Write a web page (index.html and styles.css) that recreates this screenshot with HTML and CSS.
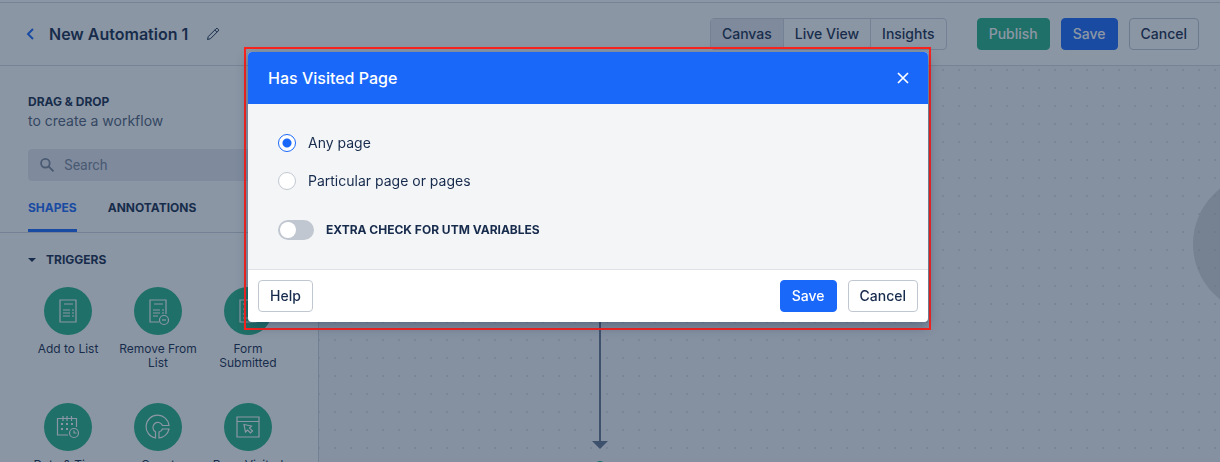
FILE: index.html
```
<!DOCTYPE html>
<html lang="en">
<head>
  <meta charset="utf-8">
  <meta name="viewport" content="width=device-width, initial-scale=1">
  <title>New Automation 1</title>
  <link rel="stylesheet" href="styles.css">
</head>
<body>
  <header class="topbar">
    <a class="back" href="#" aria-label="Back">
      <svg width="8" height="12" viewBox="0 0 8 12"><path d="M7 1L2 6l5 5" fill="none" stroke="currentColor" stroke-width="2"/></svg>
    </a>
    <h1>New Automation 1</h1>
    <button class="edit" aria-label="Rename">
      <svg width="14" height="14" viewBox="0 0 14 14" fill="none" stroke="currentColor" stroke-width="1" stroke-linejoin="round"><path d="M1.500 12.500l.8-3L10 1.800q.9-.9 1.800 0l.4.4q.9.900 0 1.800L4.500 11.700zM8.800 3l2.200 2.200"/></svg>
    </button>
    <div class="views">
      <button class="active">Canvas</button>
      <button>Live View</button>
      <button>Insights</button>
    </div>
    <div class="actions">
      <button class="btn green">Publish</button>
      <button class="btn blue">Save</button>
      <button class="btn">Cancel</button>
    </div>
  </header>

  <div class="main">
    <aside class="sidebar">
      <div class="intro">
        <h2>DRAG &amp; DROP</h2>
        <p>to create a workflow</p>
        <label class="search">
          <svg width="16" height="16" viewBox="0 0 16 16" fill="none" stroke="currentColor" stroke-width="2"><circle cx="6" cy="6" r="4.800"/><path d="M9.500 9.500L15 15"/></svg>
          <input type="text" placeholder="Search" aria-label="Search">
        </label>
      </div>
      <nav class="tabs">
        <a class="active" href="#">SHAPES</a>
        <a href="#">ANNOTATIONS</a>
      </nav>
      <h3><span class="caret"></span>TRIGGERS</h3>
      <div class="shapes">
        <div class="shape">
          <span class="circle">
            <svg width="24" height="24" viewBox="0 0 24 24"><path d="M4 1h16v22H4zM8 5h9M7 11h7M16 11h2M7 14h7M16 14h2M7 17h7M16 17h2"/></svg>
          </span>
          Add to List
        </div>
        <div class="shape">
          <span class="circle">
            <svg width="24" height="24" viewBox="0 0 24 24"><path d="M13 23H4V1h16v14M8 5h9M7 11h7M16 11h2M7 14h7M16 14h2M7 17h5"/><circle cx="18" cy="21" r="4.500"/><path d="M16 21h4"/></svg>
          </span>
          Remove From List
        </div>
        <div class="shape">
          <span class="circle">
            <svg width="24" height="24" viewBox="0 0 24 24"><path d="M4 1h16v22H4zM7 5h3M12 5h5M7 10h3M12 10h5M7 15h3M12 15h5M7 19h10"/></svg>
          </span>
          Form Submitted
        </div>
        <div class="shape">
          <span class="circle">
            <svg width="24" height="24" viewBox="0 0 24 24"><path d="M12 20H1.500V3.500h19V12M7 1v5M11 1v5M15.500 1v5"/><path class="dots" d="M5 9h2M10 9h2M15 9h2M5 14h2M10 14h2"/><circle cx="18" cy="18" r="4.500"/><path d="M18 15.500V18h2.500"/></svg>
          </span>
          Date &amp; Time
        </div>
        <div class="shape">
          <span class="circle">
            <svg width="24" height="24" viewBox="0 0 24 24"><path d="M23 10.500A11.500 11.500 0 1 0 9.500 23V16.800A5 5 0 1 1 16.500 10.500zM23 14h-6.500a5 5 0 0 1-3.500 3v6A11.500 11.500 0 0 0 23 14z"/></svg>
          </span>
          Count
        </div>
        <div class="shape">
          <span class="circle">
            <svg width="24" height="24" viewBox="0 0 24 24"><path d="M1 2h22v20H1zM1 6.500h22"/><path d="M8 9.500l7.500 1.500-2 2 3 3-2 2-3-3-2 2z"/></svg>
          </span>
          Page Visited
        </div>
      </div>
    </aside>

    <main class="canvas">
      <div class="node"></div>
      <svg class="arrow" width="16" height="139" viewBox="0 0 16 139"><path d="M7 0h2v131h7l-8 8-8-8h7z" fill="#65748f"/></svg>
      <div class="endpoint"></div>
    </main>
  </div>

  <div class="overlay">
    <div class="frame">
      <form class="modal" role="dialog" aria-labelledby="modal-title">
        <div class="modal-header">
          <h2 id="modal-title">Has Visited Page</h2>
          <button type="button" class="close" aria-label="Close">
            <svg width="12" height="12" viewBox="0 0 12 12"><path d="M1 1l10 10M11 1L1 11" stroke="#fff" stroke-width="1.700"/></svg>
          </button>
        </div>
        <div class="modal-body">
          <label class="option"><input type="radio" name="page" checked>Any page</label>
          <label class="option"><input type="radio" name="page">Particular page or pages</label>
          <label class="toggle"><input type="checkbox" role="switch">EXTRA CHECK FOR UTM VARIABLES</label>
        </div>
        <div class="modal-footer">
          <button type="button" class="btn help">Help</button>
          <button type="button" class="btn blue">Save</button>
          <button type="button" class="btn">Cancel</button>
        </div>
      </form>
    </div>
  </div>
</body>
</html>
```
FILE: styles.css
```
* {
  box-sizing: border-box;
}

body {
  margin: 0;
  height: 100vh;
  display: flex;
  flex-direction: column;
  overflow: hidden;
  font-family: Inter, "Liberation Sans", sans-serif;
  font-size: 14px;
  color: #172b4d;
  background: #fff;
}

h1, h2, h3, p {
  margin: 0;
}

button, input {
  font: inherit;
  color: inherit;
}

a {
  color: inherit;
  text-decoration: none;
}

svg {
  display: block;
}

/* top bar */
.topbar {
  flex: none;
  display: flex;
  align-items: center;
  height: 64px;
  margin-top: 2px;
  padding: 0 21px 0 26px;
  border-top: 1px solid #d5d8e0;
  border-bottom: 1px solid #d5d8e0;
}

.back {
  color: #1a68fa;
  margin-right: 15px;
}

.topbar h1 {
  font-size: 16px;
  line-height: 20px;
  font-weight: 600;
}

.edit {
  margin-left: 18px;
  padding: 0;
  border: 0;
  background: none;
}

.views {
  display: flex;
  margin-left: auto;
  border: 1px solid #d0d4de;
  border-radius: 4px;
}

.views button {
  height: 30px;
  padding: 0 11px 2px;
  border: 0;
  border-left: 1px solid #d0d4de;
  background: none;
  font-weight: 500;
}

.views button:first-child {
  border-left: 0;
}

.views .active {
  background: #e7e7f0;
}

.actions {
  display: flex;
  gap: 11px;
  margin-left: 30px;
}

.btn {
  height: 32px;
  padding: 0 11px 2px;
  border: 1px solid #c1c7d0;
  border-radius: 4px;
  background: #fff;
  font-weight: 500;
}

.green {
  background: #27b286;
  border-color: #27b286;
  color: #fff;
}

.blue {
  background: #1a68fa;
  border-color: #1a68fa;
  color: #fff;
}

/* sidebar */
.main {
  flex: 1;
  display: flex;
  min-height: 0;
}

.sidebar {
  flex: none;
  width: 319px;
  border-right: 1px solid #cdd2dc;
  overflow: hidden;
}

.intro {
  padding: 26px 28px 0;
}

.intro h2 {
  font-size: 12px;
  line-height: 20px;
}

.intro p {
  line-height: 18px;
  color: #505f79;
}

.search {
  display: flex;
  align-items: center;
  gap: 10px;
  height: 32px;
  margin-top: 19px;
  padding: 0 12px;
  border-radius: 4px;
  background: #e7e7f0;
  color: #7a869a;
}

.search input {
  width: 100%;
  padding: 0;
  border: 0;
  outline: 0;
  background: none;
  font-family: Roboto, sans-serif;
}

.search input::placeholder {
  color: #7a869a;
}

.tabs {
  display: flex;
  gap: 31px;
  margin-top: 15px;
  padding: 0 28px;
  border-bottom: 1px solid #d0d4de;
}

.tabs a {
  height: 36px;
  line-height: 24px;
  font-size: 12px;
  font-weight: 700;
}

.tabs .active {
  color: #1a68fa;
  border-bottom: 3px solid #1a68fa;
}

.sidebar h3 {
  display: flex;
  align-items: center;
  gap: 10px;
  margin-top: 17px;
  padding: 0 28px;
  font-size: 12px;
  line-height: 20px;
}

.caret {
  border: 4px solid transparent;
  border-top-color: #172b4d;
  border-bottom: 0;
}

.shapes {
  display: grid;
  grid-template-columns: repeat(3, 90px);
  grid-auto-rows: 116px;
  margin-top: 17px;
  padding-left: 23px;
}

.shape {
  padding: 0 4px;
  text-align: center;
  font-size: 12px;
  line-height: 14px;
}

.circle {
  display: flex;
  align-items: center;
  justify-content: center;
  width: 48px;
  height: 48px;
  margin: 0 auto 7px;
  border-radius: 50%;
  background: #27b286;
}

.circle svg {
  fill: none;
  stroke: #fff;
  stroke-width: 1.2;
  overflow: visible;
}

.circle .dots {
  stroke-width: 2;
}

/* canvas */
.canvas {
  position: relative;
  flex: 1;
  overflow: hidden;
  background: #f3f4f8 radial-gradient(circle, #dcdfe7 1px, transparent 1px) 8px -5px / 16px 18px;
}

.node {
  position: absolute;
  top: 108px;
  left: 874px;
  width: 140px;
  height: 140px;
  border-radius: 50%;
  background: rgba(182, 180, 184, 0.5);
}

.arrow {
  position: absolute;
  top: 244px;
  left: 273px;
}

.endpoint {
  position: absolute;
  top: 395px;
  left: 277px;
  width: 8px;
  height: 8px;
  border-radius: 50%;
  background: #27b286;
}

/* modal */
.overlay {
  position: fixed;
  inset: 0;
  display: flex;
  justify-content: center;
  align-items: flex-start;
  padding: 47px 45px 0 0;
  background: rgba(23, 46, 74, 0.5);
}

.frame {
  padding: 3px 1px 6px 2px;
  border: 2px solid #ff231c;
}

.modal {
  width: 680px;
  border-radius: 4px;
  background: #fff;
  box-shadow: 0 4px 12px rgba(23, 43, 77, 0.4);
}

.modal-header {
  display: flex;
  align-items: center;
  justify-content: space-between;
  height: 52px;
  padding: 0 19px 0 20px;
  border-radius: 4px 4px 0 0;
  background: #1a68fa;
  color: #fff;
}

.modal-header h2 {
  font-size: 16px;
  font-weight: 500;
}

.close {
  padding: 0;
  border: 0;
  background: none;
}

.modal-body {
  display: flex;
  flex-direction: column;
  align-items: flex-start;
  gap: 20px;
  padding: 30px 30px 29px;
  background: #f4f5f7;
}

.option, .toggle {
  display: flex;
  align-items: center;
  gap: 12px;
  line-height: 18px;
}

.toggle {
  margin-top: 10px;
  line-height: 20px;
  font-size: 12px;
  font-weight: 700;
}

.modal-body input {
  appearance: none;
  margin: 0;
  background: #fff;
}

.option input {
  width: 18px;
  height: 18px;
  border: 1px solid #c1c7d0;
  border-radius: 50%;
}

.option input:checked {
  border-color: #1a68fa;
  background: radial-gradient(circle, #1a68fa 4px, #fff 5px);
}

.toggle input {
  width: 36px;
  height: 20px;
  padding: 2px;
  border-radius: 10px;
  background: #c1c7d0;
}

.toggle input::before {
  content: "";
  display: block;
  width: 16px;
  height: 16px;
  border-radius: 50%;
  background: #fff;
}

.modal-footer {
  display: flex;
  gap: 11px;
  padding: 10px;
  border-top: 1px solid #dfe1e6;
}

.help {
  margin-right: auto;
}
```
